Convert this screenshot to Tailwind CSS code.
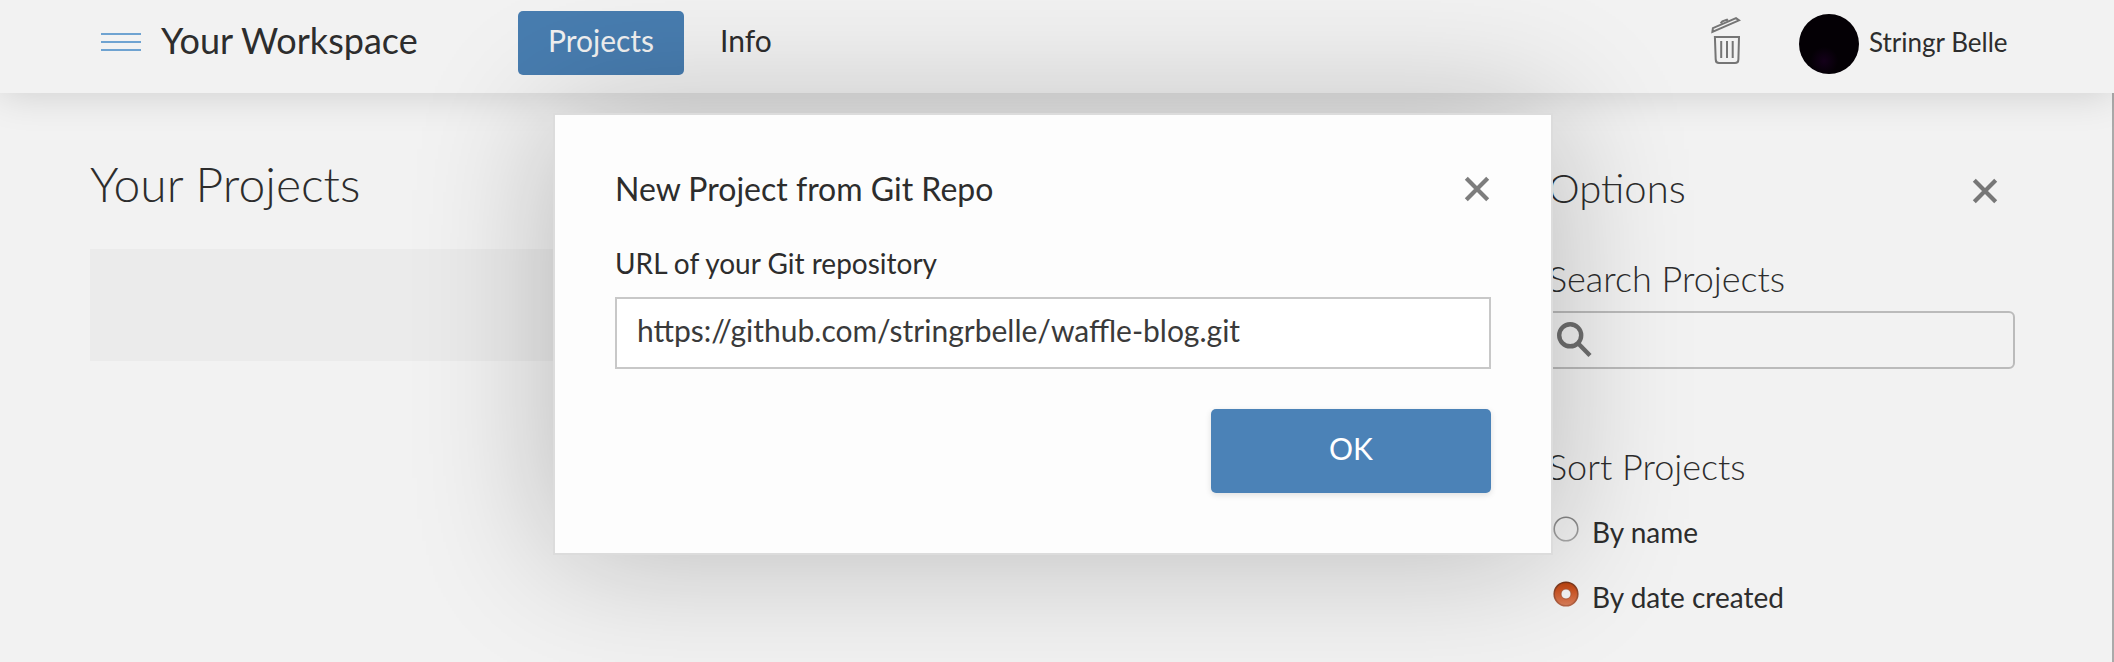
<!DOCTYPE html>
<html lang="en">
<head>
<meta charset="utf-8">
<title>Your Workspace</title>
<script src="https://cdn.jsdelivr.net/npm/@tailwindcss/browser@4"></script>
</head>
<body class="relative flex h-[662px] w-[2114px] flex-col overflow-hidden bg-[#f2f2f2] font-[Lato,sans-serif] text-[#2d2d2d]">
  <header class="relative z-10 flex h-[93px] shrink-0 items-start bg-[#f2f2f2] pl-[101px] shadow-[0_0_40px_rgba(0,0,0,0.16)]">
    <div class="flex w-[417px] items-start">
      <div class="mt-[33px] mr-5 flex w-10 flex-col gap-1.5">
        <span class="h-0.5 bg-[#6fa3d1]"></span>
        <span class="h-0.5 bg-[#6fa3d1]"></span>
        <span class="h-0.5 bg-[#6fa3d1]"></span>
      </div>
      <h1 class="mt-5 text-[36px] leading-10">Your Workspace</h1>
    </div>
    <nav class="mt-[11px] flex items-start text-[30px] leading-[58px]">
      <a class="h-16 w-[166px] rounded-[5px] bg-[#487db0] text-center text-[#f2f2f2]">Projects</a>
      <a class="ml-9">Info</a>
    </nav>
    <div class="ml-auto flex items-start pr-[106px]">
      <svg class="mt-4 mr-[57px] h-12 w-8" viewBox="0 0 32 48" fill="none" stroke="#757575" stroke-width="2">
        <path d="M2.4 16 2.900 12.100 26 2.200 29 4.400Z"/>
        <path d="M10.600 7.400 12.400 5.300 17 3.600 17.800 4.800"/>
        <path d="M4.900 21H29L28.400 43.400Q28.300 47 25 47H9Q5.800 47 5.700 43.400Z"/>
        <path d="M11.200 25V42M17 25V42M22.700 25V42"/>
      </svg>
      <div class="mt-3.5 mr-[10px] size-[60px] rounded-full bg-[radial-gradient(circle_at_42%_78%,#14001a_0,#040005_24%,#040005_100%)]"></div>
      <span class="mt-[22px] w-[139px] text-[26px] leading-10 whitespace-nowrap">Stringr Belle</span>
    </div>
  </header>

  <main class="flex grow">
    <section class="flex-1 pt-[67px] pl-[90px]">
      <h2 class="text-[48px] leading-12 font-light">Your Projects</h2>
      <div class="mt-[41px] h-28 bg-[#ebebeb]"></div>
    </section>
    <aside class="flex w-[566px] flex-col border-r-2 border-[#aaa] pr-[97px]">
      <div class="mt-[75px] flex items-start justify-between">
        <h2 class="text-[40px] leading-10 font-light">Options</h2>
        <svg class="mt-[10px] mr-[17px] size-[26px]" viewBox="0 0 26 26" fill="none" stroke="#777" stroke-width="4.200"><path d="M2.300 2.300 23.700 23.700M23.700 2.300 2.300 23.700"/></svg>
      </div>
      <h3 class="mt-[50px] text-[36px] leading-10 font-light">Search Projects</h3>
      <div class="mt-[13px] -ml-2.5 h-[58px] rounded-md border-2 border-[#bbb]">
        <svg class="mt-[9px] ml-4 size-[36px]" viewBox="0 0 36 36" fill="none" stroke="#6f6f6f" stroke-width="4.400"><circle cx="14.200" cy="13.300" r="11"/><path d="M21.500 20.800 34 33.500"/></svg>
      </div>
      <h3 class="mt-[77px] text-[36px] leading-10 font-light">Sort Projects</h3>
      <div class="mt-[26px] flex h-10 items-start gap-[13px] pl-[5px] text-[28px] leading-10">
        <svg class="mt-[4px] size-[26px]" viewBox="0 0 26 26"><defs><linearGradient id="rim" x1="0" y1="0" x2="0" y2="1"><stop stop-color="#858585"/><stop offset="1" stop-color="#a8a8a8"/></linearGradient></defs><circle cx="13" cy="13" r="11.800" fill="none" stroke="url(#rim)" stroke-width="1.600"/></svg>
        <span>By name</span>
      </div>
      <div class="mt-[25px] flex h-10 items-start gap-[13px] pl-[5px] text-[28px] leading-10">
        <svg class="mt-[4px] size-[26px]" viewBox="0 0 26 26"><defs><linearGradient id="fill" x1="0" y1="0" x2="0" y2="1"><stop stop-color="#b8430f"/><stop offset=".35" stop-color="#cc5423"/><stop offset="1" stop-color="#d97f5b"/></linearGradient><linearGradient id="edge" x1="0" y1="0" x2="0" y2="1"><stop stop-color="#7a3418"/><stop offset="1" stop-color="#b86546"/></linearGradient></defs><circle cx="13" cy="13" r="11.800" fill="url(#fill)" stroke="url(#edge)" stroke-width="1.600"/><circle cx="13" cy="13" r="5" fill="#f4f4f4" stroke="#a5502e" stroke-width=".8"/></svg>
        <span>By date created</span>
      </div>
    </aside>
  </main>

  <div role="dialog" class="absolute top-[113px] left-[553px] z-20 flex h-[442px] w-[1000px] flex-col border-2 border-[#dcdcdc] bg-[#fdfdfd] px-[60px] shadow-[0_0_130px_rgba(0,0,0,0.24)]">
    <div class="mt-[54px] flex items-start justify-between">
      <h2 class="text-[32px] leading-10">New Project from Git Repo</h2>
      <svg class="mt-[7px] mr-px size-[26px]" viewBox="0 0 26 26" fill="none" stroke="#7d7d7d" stroke-width="4.200"><path d="M2.300 2.300 23.700 23.700M23.700 2.300 2.300 23.700"/></svg>
    </div>
    <label class="mt-[34px] text-[28px] leading-10">URL of your Git repository</label>
    <div class="mt-[14px] h-[72px] border-2 border-[#c8c8c8] bg-white pl-5 text-[30px] leading-[62px] text-[#3a3a3a]">https://github.com/stringrbelle/waffle-blog.git</div>
    <button class="mt-10 h-[84px] w-[280px] self-end rounded-[5px] bg-[#4b82b7] pb-1.5 text-[30px] text-white shadow-[0_2px_6px_rgba(0,0,0,0.12)]">OK</button>
  </div>
</body>
</html>
